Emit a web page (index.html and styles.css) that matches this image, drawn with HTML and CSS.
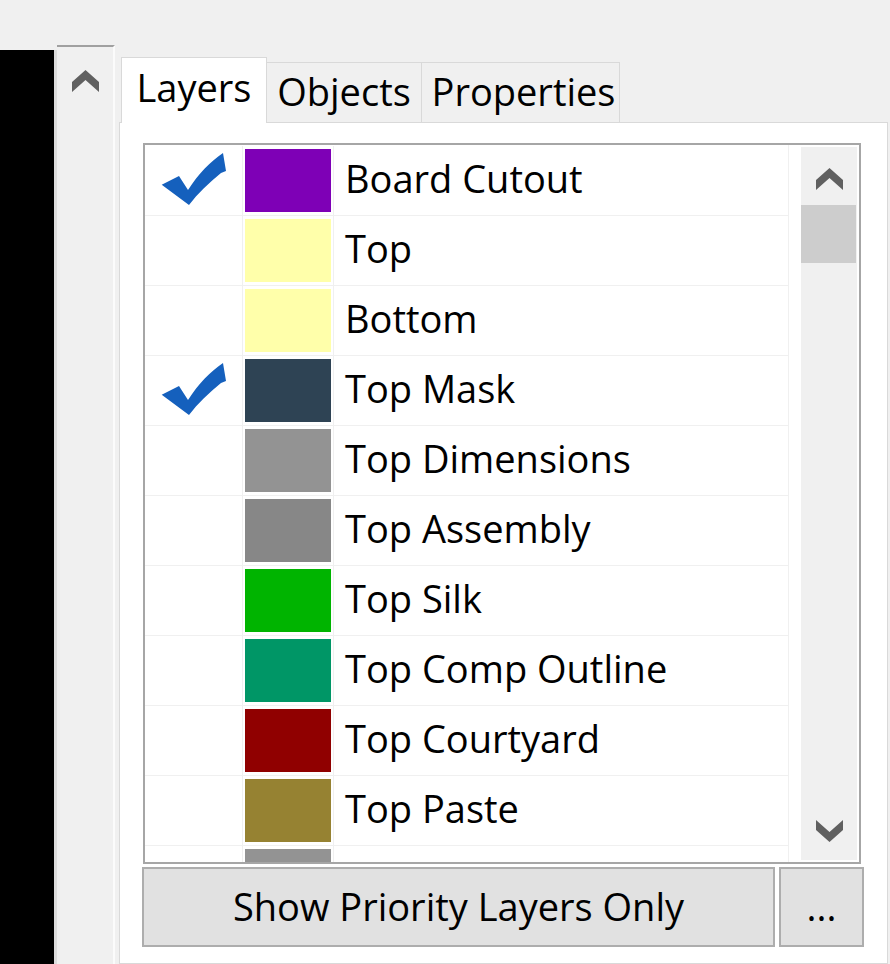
FILE: index.html
```html
<!DOCTYPE html>
<html lang="en">
<head>
    <meta charset="UTF-8">
    <meta name="viewport" content="width=device-width, initial-scale=1.0">
    <title>Layers</title>
    <link rel="stylesheet" href="styles.css">
</head>
<body>
    <div class="window">
        <div class="canvas"></div>

        <div class="dock-scroll">
            <svg class="chevron" viewBox="0 0 27 22"><polygon points="0,12 13.5,0 27,12 27,22 13.5,10 0,22"/></svg>
        </div>

        <div class="dock">
            <div class="tabs">
                <div class="tab tab-active tab-layers">Layers</div>
                <div class="tab tab-objects">Objects</div>
                <div class="tab tab-properties">Properties</div>
            </div>

            <div class="tab-body">
                <div class="layer-list">
                    <div class="layer-rows">
                        <div class="layer-row">
                            <div class="cell-check">
                                <svg class="check" viewBox="0 0 66 53"><path d="M0.7,31.7 L18,23 L27,37 C38,20 49,9 62,0 C63,6 64,12 65,18 L60,20 C48,30 37,40 28,52 Z"/></svg>
                            </div>
                            <div class="cell-color"><span class="swatch sw-cutout"></span></div>
                            <div class="cell-name">Board Cutout</div>
                        </div>
                        <div class="layer-row">
                            <div class="cell-check"></div>
                            <div class="cell-color"><span class="swatch sw-copper"></span></div>
                            <div class="cell-name">Top</div>
                        </div>
                        <div class="layer-row">
                            <div class="cell-check"></div>
                            <div class="cell-color"><span class="swatch sw-copper"></span></div>
                            <div class="cell-name">Bottom</div>
                        </div>
                        <div class="layer-row">
                            <div class="cell-check">
                                <svg class="check" viewBox="0 0 66 53"><path d="M0.7,31.7 L18,23 L27,37 C38,20 49,9 62,0 C63,6 64,12 65,18 L60,20 C48,30 37,40 28,52 Z"/></svg>
                            </div>
                            <div class="cell-color"><span class="swatch sw-mask"></span></div>
                            <div class="cell-name">Top Mask</div>
                        </div>
                        <div class="layer-row">
                            <div class="cell-check"></div>
                            <div class="cell-color"><span class="swatch sw-dim"></span></div>
                            <div class="cell-name">Top Dimensions</div>
                        </div>
                        <div class="layer-row">
                            <div class="cell-check"></div>
                            <div class="cell-color"><span class="swatch sw-assy"></span></div>
                            <div class="cell-name">Top Assembly</div>
                        </div>
                        <div class="layer-row">
                            <div class="cell-check"></div>
                            <div class="cell-color"><span class="swatch sw-silk"></span></div>
                            <div class="cell-name">Top Silk</div>
                        </div>
                        <div class="layer-row">
                            <div class="cell-check"></div>
                            <div class="cell-color"><span class="swatch sw-outline"></span></div>
                            <div class="cell-name">Top Comp Outline</div>
                        </div>
                        <div class="layer-row">
                            <div class="cell-check"></div>
                            <div class="cell-color"><span class="swatch sw-court"></span></div>
                            <div class="cell-name">Top Courtyard</div>
                        </div>
                        <div class="layer-row">
                            <div class="cell-check"></div>
                            <div class="cell-color"><span class="swatch sw-paste"></span></div>
                            <div class="cell-name">Top Paste</div>
                        </div>
                        <!-- next row is scrolled mostly out of view, only the swatch top shows -->
                        <div class="layer-row">
                            <div class="cell-check"></div>
                            <div class="cell-color"><span class="swatch sw-dim"></span></div>
                            <div class="cell-name"></div>
                        </div>
                    </div>

                    <div class="list-scroll">
                        <div class="scroll-btn scroll-up">
                            <svg class="chevron" viewBox="0 0 27 22"><polygon points="0,12 13.5,0 27,12 27,22 13.5,10 0,22"/></svg>
                        </div>
                        <div class="scroll-thumb"></div>
                        <div class="scroll-track"></div>
                        <div class="scroll-btn scroll-down">
                            <svg class="chevron" viewBox="0 0 27 22"><polygon points="0,0 13.5,12 27,0 27,10 13.5,22 0,10"/></svg>
                        </div>
                    </div>
                </div>

                <div class="button-row">
                    <button class="btn btn-wide">Show Priority Layers Only</button>
                    <button class="btn btn-more">...</button>
                </div>
            </div>
        </div>
    </div>
</body>
</html>
```

FILE: styles.css
```css
body {
    margin: 0;
    background: #f0f0f0;
    font-family: "Open Sans", "Noto Sans", sans-serif;
    font-size: 38px;
    color: #000;
}
.window {
    display: flex;
    width: 890px;
    height: 964px;
    overflow: hidden;
}
.canvas {
    width: 54px;
    margin-top: 50px;
    background: #000;
    border-right: 3px solid #dcdcdc;
}
.dock-scroll {
    width: 58px;
    margin-top: 45px;
    border-top: 2px solid #a0a0a0;
    border-right: 2px solid #fbfbfb;
    background: #f0f0f0;
    display: flex;
    justify-content: center;
    padding-top: 23px;
    box-sizing: border-box;
}
.chevron {
    width: 27px;
    height: 22px;
    fill: #606060;
}
.dock {
    width: 769px;
    margin-left: 4px;
    padding-top: 57px;
    display: flex;
    flex-direction: column;
}
.tabs {
    display: flex;
    align-items: flex-end;
    height: 65px;
    padding-left: 2px;
}
.tab {
    height: 60px;
    box-sizing: border-box;
    border: 1px solid #d9d9d9;
    border-bottom: none;
    background: #f0f0f0;
    display: flex;
    align-items: center;
    justify-content: center;
    line-height: 1;
    padding-bottom: 4px;
    white-space: nowrap;
}
.tab + .tab {
    border-left: none;
}
.tab-active {
    height: 66px;
    margin-bottom: -1px;
    background: #fff;
    position: relative;
    z-index: 1;
    padding-bottom: 8px;
}
.tab-layers { width: 146px; }
.tab-objects { width: 155px; }
.tab-properties { width: 198px; padding-left: 6px; }
.tab-body {
    flex: 1;
    background: #fff;
    border: 1px solid #d9d9d9;
    padding: 20px 0 0 23px;
}
.layer-list {
    width: 718px;
    height: 721px;
    box-sizing: border-box;
    border: 2px solid #a6a6a6;
    display: flex;
}
.layer-rows {
    width: 644px;
    box-sizing: border-box;
    border-right: 1px solid #f0f0f0;
    overflow: hidden;
    padding-top: 1px;
}
.layer-row {
    display: flex;
    height: 70px;
    flex-shrink: 0;
    box-sizing: border-box;
    border-bottom: 1px solid #f0f0f0;
}
.cell-check {
    width: 98px;
    box-sizing: border-box;
    border-right: 1px solid #f0f0f0;
    display: flex;
    align-items: center;
    justify-content: center;
}
.check {
    width: 66px;
    height: 53px;
    fill: #1560bd;
    margin-top: -3px;
}
.cell-color {
    width: 91px;
    box-sizing: border-box;
    border-right: 1px solid #f0f0f0;
    display: flex;
    align-items: center;
    justify-content: center;
}
.swatch {
    width: 86px;
    height: 63px;
}
.sw-cutout { background: #7e00b6; }
.sw-copper { background: #ffffaa; }
.sw-mask { background: #2e4354; }
.sw-dim { background: #939393; }
.sw-assy { background: #878787; }
.sw-silk { background: #00b400; }
.sw-outline { background: #009666; }
.sw-court { background: #900000; }
.sw-paste { background: #968232; }
.cell-name {
    flex: 1;
    padding-left: 11px;
    padding-bottom: 5px;
    display: flex;
    align-items: center;
    white-space: nowrap;
    line-height: 1;
}
.list-scroll {
    width: 56px;
    margin: 2px 2px 2px 12px;
    background: #f0f0f0;
    display: flex;
    flex-direction: column;
}
.scroll-btn {
    height: 58px;
    display: flex;
    align-items: center;
    justify-content: center;
}
.scroll-up {
    padding-top: 6px;
    box-sizing: border-box;
}
.scroll-thumb {
    height: 58px;
    background: #cdcdcd;
    margin-right: 1px;
}
.scroll-track {
    flex: 1;
}
.button-row {
    display: flex;
    gap: 4px;
    margin: 3px 0 0 -1px;
}
.btn {
    height: 80px;
    box-sizing: border-box;
    border: 2px solid #adadad;
    background: #e1e1e1;
    font-family: inherit;
    font-size: 38px;
    color: #000;
    padding: 0 0 3px;
    line-height: 1;
    white-space: nowrap;
}
.btn-wide { width: 633px; }
.btn-more { width: 85px; }
```
